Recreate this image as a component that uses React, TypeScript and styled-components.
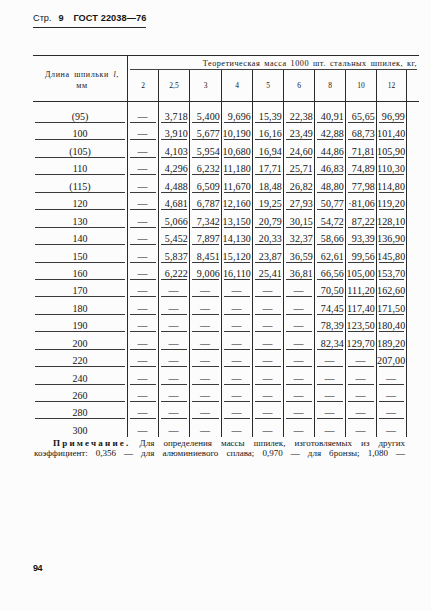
import styled, { createGlobalStyle } from "styled-components";

const GlobalStyle = createGlobalStyle`
  html, body {
    margin: 0;
    padding: 0;
    background: #fcfcfc;
  }
  body {
    width: 431px;
    height: 611px;
    overflow: hidden;
    color: #151515;
    font-family: "Liberation Serif", "DejaVu Serif", serif;
  }
`;

const DASH = "—";

const sizes = ["2", "2,5", "3", "4", "5", "6", "8", "10", "12"];

const rows: string[][] = [
  ["(95)", DASH, "3,718", "5,400", "9,696", "15,39", "22,38", "40,91", "65,65", "96,99"],
  ["100", DASH, "3,910", "5,677", "10,190", "16,16", "23,49", "42,88", "68,73", "101,40"],
  ["(105)", DASH, "4,103", "5,954", "10,680", "16,94", "24,60", "44,86", "71,81", "105,90"],
  ["110", DASH, "4,296", "6,232", "11,180", "17,71", "25,71", "46,83", "74,89", "110,30"],
  ["(115)", DASH, "4,488", "6,509", "11,670", "18,48", "26,82", "48,80", "77,98", "114,80"],
  ["120", DASH, "4,681", "6,787", "12,160", "19,25", "27,93", "50,77", "·81,06", "119,20"],
  ["130", DASH, "5,066", "7,342", "13,150", "20,79", "30,15", "54,72", "87,22", "128,10"],
  ["140", DASH, "5,452", "7,897", "14,130", "20,33", "32,37", "58,66", "93,39", "136,90"],
  ["150", DASH, "5,837", "8,451", "15,120", "23,87", "36,59", "62,61", "99,56", "145,80"],
  ["160", DASH, "6,222", "9,006", "16,110", "25,41", "36,81", "66,56", "105,00", "153,70"],
  ["170", DASH, DASH, DASH, DASH, DASH, DASH, "70,50", "111,20", "162,60"],
  ["180", DASH, DASH, DASH, DASH, DASH, DASH, "74,45", "117,40", "171,50"],
  ["190", DASH, DASH, DASH, DASH, DASH, DASH, "78,39", "123,50", "180,40"],
  ["200", DASH, DASH, DASH, DASH, DASH, DASH, "82,34", "129,70", "189,20"],
  ["220", DASH, DASH, DASH, DASH, DASH, DASH, DASH, DASH, "207,00"],
  ["240", DASH, DASH, DASH, DASH, DASH, DASH, DASH, DASH, DASH],
  ["260", DASH, DASH, DASH, DASH, DASH, DASH, DASH, DASH, DASH],
  ["280", DASH, DASH, DASH, DASH, DASH, DASH, DASH, DASH, DASH],
  ["300", DASH, DASH, DASH, DASH, DASH, DASH, DASH, DASH, DASH],
];

const Page = styled.div`
  width: 431px;
  height: 611px;
  box-sizing: border-box;
  padding: 12px 0 0 33px;
  display: flex;
  flex-direction: column;
`;

const RunningHead = styled.div`
  align-self: flex-start;
  display: flex;
  align-items: baseline;
  gap: 7px;
  padding: 0 0 3px 0;
  border-bottom: 1.5px solid #2a2a2a;
  font-family: "Liberation Sans", Arial, sans-serif;
  font-size: 9.2px;
  line-height: 12px;
`;

const Bold = styled.span`
  font-weight: 700;
  letter-spacing: 0.1px;
`;

const Table = styled.table`
  margin-top: 27px;
  width: 386px;
  table-layout: fixed;
  border-collapse: separate;
  border-spacing: 0;
  border-top: 1.5px solid #2a2a2a;
  font-size: 10px;
`;

const line = (c: string) =>
  `linear-gradient(${c}, ${c}) no-repeat center bottom / calc(100% - 4px) 1px`;

const HeadLabel = styled.th`
  font-weight: 400;
  font-size: 8px;
  line-height: 11px;
  text-align: center;
  vertical-align: top;
  padding: 13px 0 0 4px;
  letter-spacing: 0.6px;
  word-spacing: 2px;
  white-space: nowrap;
  border-bottom: 1.5px solid #2a2a2a;
`;

const Title = styled.th`
  height: 14px;
  box-sizing: border-box;
  font-weight: 400;
  font-size: 8.2px;
  letter-spacing: 0.5px;
  word-spacing: 1.5px;
  white-space: nowrap;
  text-align: right;
  padding: 0 2px 0 0;
  vertical-align: middle;
  border-left: 1.5px solid #2a2a2a;
  background: ${line("#444")};
`;

const SizeHead = styled.th<{ $last?: boolean }>`
  height: 32px;
  box-sizing: border-box;
  font-weight: 400;
  font-size: 7.5px;
  text-align: center;
  vertical-align: middle;
  padding: 0;
  border-left: 1.5px solid #2a2a2a;
  border-right: ${(p) => (p.$last ? "1.5px solid #2a2a2a" : "none")};
  border-bottom: 1.5px solid #2a2a2a;
`;

const Filler = styled.th`
  border-bottom: 1.5px solid #2a2a2a;
`;

const Spacer = styled.td<{ $rule?: boolean; $last?: boolean }>`
  height: 3.6px;
  padding: 0;
  border-left: ${(p) => (p.$rule ? "1.5px solid #2a2a2a" : "none")};
  border-right: ${(p) => (p.$last ? "1.5px solid #2a2a2a" : "none")};
`;

const LengthCell = styled.td<{ $ruled: boolean }>`
  height: 17.44px;
  box-sizing: border-box;
  padding: 0 0 1px 0;
  font-size: 10px;
  line-height: 11px;
  text-align: center;
  vertical-align: bottom;
  background: ${(p) => (p.$ruled ? line("#3a3a3a") : "none")};
`;

const ValueCell = styled.td<{ $dash: boolean; $ruled: boolean; $last?: boolean }>`
  height: 17.44px;
  box-sizing: border-box;
  padding: 0 1px 1px 0;
  font-size: 10px;
  line-height: 11px;
  white-space: nowrap;
  letter-spacing: 0.15px;
  text-align: ${(p) => (p.$dash ? "center" : "right")};
  vertical-align: bottom;
  border-left: 1.5px solid #2a2a2a;
  border-right: ${(p) => (p.$last ? "1.5px solid #2a2a2a" : "none")};
  background: ${(p) => (p.$ruled ? line("#3a3a3a") : "none")};
`;

const EmptyCell = styled.td`
  padding: 0;
`;

const Note = styled.div`
  margin: 1px 0 0 1px;
  width: 371px;
  font-size: 9px;
  line-height: 10.5px;
`;

const NoteLine = styled.p<{ $indent?: boolean }>`
  margin: 0;
  white-space: nowrap;
  text-align: justify;
  text-align-last: justify;
  padding-left: ${(p) => (p.$indent ? "19px" : "0")};
`;

const NoteLabel = styled.b`
  letter-spacing: 2.2px;
`;

const PageNo = styled.div`
  margin-top: auto;
  margin-bottom: 38px;
  font-family: "Liberation Sans", Arial, sans-serif;
  font-weight: 700;
  font-size: 9px;
  letter-spacing: -0.5px;
`;

export default function App() {
  const colWidths = [94, 31, 31, 32, 31, 31, 31, 31, 31, 31, 12];
  return (
    <>
      <GlobalStyle />
      <Page>
        <RunningHead>
          <span>Стр.</span>
          <Bold>9</Bold>
          <Bold>&nbsp;ГОСТ 22038—76</Bold>
        </RunningHead>

        <Table>
          <colgroup>
            {colWidths.map((w, i) => (
              <col key={i} style={{ width: w }} />
            ))}
          </colgroup>
          <thead>
            <tr>
              <HeadLabel rowSpan={2}>
                Длина шпильки <i>l</i>,
                <br />
                мм
              </HeadLabel>
              <Title colSpan={10}>Теоретическая масса 1000 шт. стальных шпилек, кг,</Title>
            </tr>
            <tr>
              {sizes.map((s, i) => (
                <SizeHead key={s} $last={i === sizes.length - 1}>
                  {s}
                </SizeHead>
              ))}
              <Filler />
            </tr>
          </thead>
          <tbody>
            <tr>
              <Spacer />
              {sizes.map((s, i) => (
                <Spacer key={s} $rule $last={i === sizes.length - 1} />
              ))}
              <Spacer />
            </tr>
            {rows.map((r, ri) => {
              const ruled = ri < rows.length - 1;
              return (
                <tr key={r[0]}>
                  <LengthCell $ruled={ruled}>{r[0]}</LengthCell>
                  {r.slice(1).map((v, ci) => (
                    <ValueCell
                      key={ci}
                      $dash={v === DASH}
                      $ruled={ruled}
                      $last={ci === sizes.length - 1}
                    >
                      {v}
                    </ValueCell>
                  ))}
                  <EmptyCell />
                </tr>
              );
            })}
          </tbody>
        </Table>

        <Note>
          <NoteLine $indent>
            <NoteLabel>Примечание.</NoteLabel> Для определения массы шпилек, изготовляемых из других
          </NoteLine>
          <NoteLine>
            коэффициент: 0,356 — для алюминиевого сплава; 0,970 — для бронзы; 1,080 —
          </NoteLine>
        </Note>

        <PageNo>94</PageNo>
      </Page>
    </>
  );
}
